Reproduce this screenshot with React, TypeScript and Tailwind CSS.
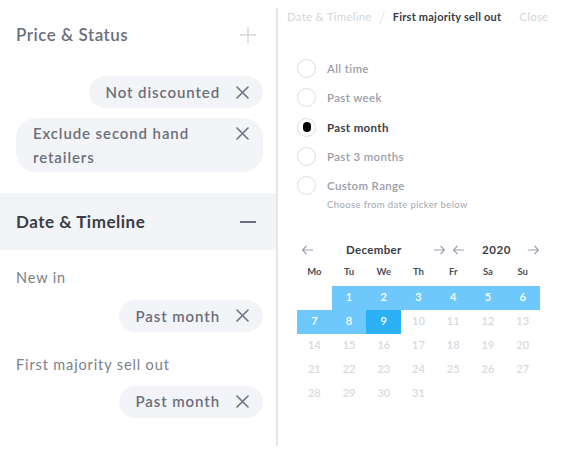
import { ReactNode } from "react";

const font = { fontFamily: "Lato, 'Open Sans', sans-serif" };

function XIcon() {
    return (
        <svg width="13" height="13" viewBox="0 0 13 13" className="shrink-0">
            <path d="M1 1L12 12M12 1L1 12" stroke="#6b7280" strokeWidth="1.6" strokeLinecap="round" />
        </svg>
    );
}

function Chip({ children, full }: { children: ReactNode; full?: boolean }) {
    if (full) {
        return (
            <div className="ml-4 mr-[13px] flex h-[54px] items-start justify-between rounded-[20px] bg-[#f3f4f7] pl-[17px] pr-[14px] pt-[3px] text-[15px] font-semibold leading-[24px] tracking-[0.06em] text-[#6b6f7b]">
                <span className="w-[190px]">{children}</span>
                <span className="pt-[6px]">
                    <XIcon />
                </span>
            </div>
        );
    }
    return (
        <div className="mr-[13px] flex h-8 items-center self-end rounded-full bg-[#f3f4f7] pl-[17px] pr-[14px] text-[15px] font-semibold tracking-[0.06em] text-[#6b6f7b]">
            <span className="mr-[16px]">{children}</span>
            <XIcon />
        </div>
    );
}

function Arrow({ dir }: { dir: "l" | "r" }) {
    return (
        <svg width="13" height="10" viewBox="0 0 13 10">
            {dir === "l" ? (
                <path d="M12 5H1.5M5.5 1L1.5 5L5.5 9" stroke="#9ca3af" strokeWidth="1.2" fill="none" />
            ) : (
                <path d="M1 5H11.5M7.5 1L11.5 5L7.5 9" stroke="#9ca3af" strokeWidth="1.2" fill="none" />
            )}
        </svg>
    );
}

const radios = ["All time", "Past week", "Past month", "Past 3 months", "Custom Range"];
const days = ["Mo", "Tu", "We", "Th", "Fr", "Sa", "Su"];

export default function App() {
    const cells: (number | null)[] = [null];
    for (let d = 1; d <= 31; d++) cells.push(d);
    while (cells.length < 35) cells.push(null);

    return (
        <div className="flex h-[454px] w-[562px] bg-white" style={font}>
            {/* Left filter panel */}
            <div className="flex w-[276px] flex-col">
                <div className="flex h-[70px] items-center justify-between pl-4 pr-[20px]">
                    <span className="text-[17px] font-semibold tracking-[0.03em] text-[#6b6f7b]">Price &amp; Status</span>
                    <svg width="16" height="16" viewBox="0 0 16 16">
                        <path d="M8 0V16M0 8H16" stroke="#d4d6dc" strokeWidth="1.3" />
                    </svg>
                </div>
                <div className="mt-[6px] flex flex-col">
                    <Chip>Not discounted</Chip>
                </div>
                <div className="mt-[10px]">
                    <Chip full>Exclude second hand retailers</Chip>
                </div>
                <div className="mt-[21px] flex h-[57px] items-center justify-between bg-[#f3f4f7] pl-4 pr-[20px]">
                    <span className="text-[17px] font-bold tracking-[0.03em] text-[#3a3d45]">Date &amp; Timeline</span>
                    <div className="h-[2px] w-4 bg-[#6b6f7b]" />
                </div>
                <div className="pl-4 pt-[17px] text-[14.5px] tracking-[0.06em] text-[#7b7f8a]">New in</div>
                <div className="mt-[11px] flex flex-col">
                    <Chip>Past month</Chip>
                </div>
                <div className="pl-4 pt-[22px] text-[14.5px] tracking-[0.06em] text-[#7b7f8a]">First majority sell out</div>
                <div className="mt-[10px] flex flex-col">
                    <Chip>Past month</Chip>
                </div>
            </div>

            {/* Divider */}
            <div className="mt-[8px] h-[438px] w-[2px] bg-[#e6e7eb]" />

            {/* Right detail panel */}
            <div className="flex flex-1 flex-col">
                <div className="flex h-[34px] items-center pl-[9px] text-[11.5px] tracking-[0.02em]">
                    <span className="text-[#d4d6dc]">Date &amp; Timeline</span>
                    <span className="mx-[7px] text-[16px] font-light text-[#d4d6dc]">/</span>
                    <span className="text-[11px] font-bold text-[#3a3d45]">First majority sell out</span>
                    <span className="ml-[18px] text-[#d4d6dc]">Close</span>
                </div>
                <div className="mt-[20px] flex flex-col pl-[19px]">
                    {radios.map((r) => {
                        const on = r === "Past month";
                        return (
                            <div key={r} className="flex h-[29.3px] items-center">
                                <div className="flex h-[19px] w-[19px] items-center justify-center rounded-full border border-[#dcdde2]">
                                    {on && <div className="h-[10px] w-[8px] rounded-full bg-black" />}
                                </div>
                                <span
                                    className={`ml-[11px] text-[11.5px] tracking-[0.03em] ${
                                        on ? "font-bold text-[#3a3d45]" : "font-semibold text-[#9a9ea8]"
                                    }`}
                                >
                                    {r}
                                </span>
                            </div>
                        );
                    })}
                    <div className="-mt-[2px] pl-[30px] text-[9.5px] tracking-[0.04em] text-[#a4a8b1]">Choose from date picker below</div>
                </div>

                {/* Calendar */}
                <div className="mt-[27px] w-[262px] self-start pl-[19px]">
                    <div className="flex h-[20px] items-center">
                        <span className="ml-[4px]">
                            <Arrow dir="l" />
                        </span>
                        <span className="ml-[32px] w-[87px] text-[11.5px] font-bold tracking-[0.03em] text-[#3a3d45]">December</span>
                        <Arrow dir="r" />
                        <span className="ml-[6px]">
                            <Arrow dir="l" />
                        </span>
                        <span className="ml-[17px] w-[45px] text-[11.5px] font-bold tracking-[0.05em] text-[#3a3d45]">2020</span>
                        <Arrow dir="r" />
                    </div>
                    <div className="mt-[1px] grid grid-cols-7">
                        {days.map((d) => (
                            <div key={d} className="flex h-[22px] items-center justify-center text-[9.5px] font-bold text-[#4b4f59]">
                                {d}
                            </div>
                        ))}
                    </div>
                    <div className="mt-[3px] grid grid-cols-7">
                        {cells.map((c, i) => {
                            const range = c !== null && c <= 8;
                            const sel = c === 9;
                            return (
                                <div
                                    key={i}
                                    className={`flex h-[24px] items-center justify-center text-[11px] font-semibold ${
                                        sel
                                            ? "bg-[#2cb1f6] text-white"
                                            : range
                                              ? "bg-[#6fc8fc] text-white"
                                              : "text-[#d8dae0]"
                                    }`}
                                >
                                    {c}
                                </div>
                            );
                        })}
                    </div>
                </div>
            </div>
        </div>
    );
}
